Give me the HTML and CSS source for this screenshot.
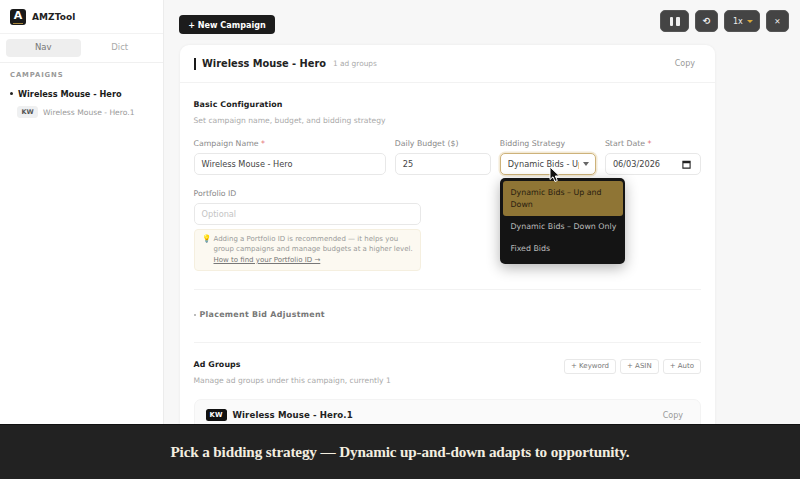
FILE: index.html
```html
<!DOCTYPE html>
<html lang="en">
<head>
<meta charset="utf-8">
<title>AMZTool</title>
<link rel="stylesheet" href="styles.css">
</head>
<body>
<div class="app">
  <aside class="sidebar">
    <div class="brand">
      <div class="logo"><span class="logo-a">A</span><span class="logo-line"></span></div>
      <span class="brand-name">AMZTool</span>
    </div>
    <div class="tabs"><div class="tab active">Nav</div><div class="tab">Dict</div></div>
    <div class="side-section">
      <div class="side-title">CAMPAIGNS</div>
      <div class="side-campaign"><span class="dot"></span>Wireless Mouse - Hero</div>
      <div class="side-group"><span class="kw-light">KW</span><span>Wireless Mouse - Hero.1</span></div>
    </div>
  </aside>
  <main class="main">
    <div class="topbar"><button class="new-btn">+ New Campaign</button></div>
    <section class="card">
      <header class="card-head">
        <span class="bar"></span>
        <span class="card-title">Wireless Mouse - Hero</span>
        <span class="card-count">1 ad groups</span>
        <span class="copy">Copy</span>
      </header>
      <div class="card-body">
        <h3 class="sec-title">Basic Configuration</h3>
        <p class="sec-sub">Set campaign name, budget, and bidding strategy</p>
        <div class="form-row">
          <div class="field"><label class="lbl">Campaign Name <i>*</i></label><div class="input">Wireless Mouse - Hero</div></div>
          <div class="field"><label class="lbl">Daily Budget ($)</label><div class="input">25</div></div>
          <div class="field"><label class="lbl">Bidding Strategy</label>
            <div class="input select"><span class="sel-text">Dynamic Bids - Up and Down</span><span class="caret"></span></div>
          </div>
          <div class="field"><label class="lbl">Start Date <i>*</i></label>
            <div class="input date"><span>06/03/2026</span>
              <svg class="cal" width="9" height="9" viewBox="0 0 10 10"><path d="M1 1.5h8v7.5h-8z" fill="none" stroke="#222" stroke-width="1.2"/><path d="M1 1h8v2.5h-8z" fill="#222"/></svg>
            </div>
          </div>
        </div>
        <div class="portfolio">
          <label class="lbl">Portfolio ID</label>
          <div class="input placeholder">Optional</div>
          <div class="tip">
            <span class="bulb">💡</span>
            <div>Adding a Portfolio ID is recommended — it helps you group campaigns and manage budgets at a higher level. <u>How to find your Portfolio ID →</u></div>
          </div>
        </div>
        <div class="placement"><span class="tiny-arrow"></span>Placement Bid Adjustment</div>
        <div class="groups-head">
          <div>
            <h3 class="sec-title">Ad Groups</h3>
            <p class="sec-sub">Manage ad groups under this campaign, currently 1</p>
          </div>
          <div class="add-btns"><span class="add">+ Keyword</span><span class="add">+ ASIN</span><span class="add">+ Auto</span></div>
        </div>
        <div class="group-card">
          <span class="kw-dark">KW</span>
          <span class="group-name">Wireless Mouse - Hero.1</span>
          <span class="copy">Copy</span>
        </div>
      </div>
    </section>
  </main>
</div>

<div class="controls">
  <div class="ctl ctl-pause"><span></span><span></span></div>
  <div class="ctl ctl-sq ctl-reload">⟲</div>
  <div class="ctl ctl-speed"><span>1x</span><span class="gold-caret"></span></div>
  <div class="ctl ctl-sq ctl-close">✕</div>
</div>

<div class="menu">
  <div class="opt selected">Dynamic Bids – Up and Down</div>
  <div class="opt">Dynamic Bids – Down Only</div>
  <div class="opt">Fixed Bids</div>
</div>

<svg class="cursor" width="13" height="18" viewBox="0 0 13 18"><path d="M1 1v12.5l3-2.7 2 4.7 2.3-1-2-4.5h4.2z" fill="#111" stroke="#fff" stroke-width="1"/></svg>

<div class="caption">Pick a bidding strategy — Dynamic up-and-down adapts to opportunity.</div>
</body>
</html>
```
FILE: styles.css
```css
* { box-sizing: border-box; }
html, body { margin: 0; height: 479px; overflow: hidden; }
body { font-family: "DejaVu Sans", sans-serif; color: #1a1a1a; background: #f7f7f7; position: relative; }
.app { display: flex; height: 479px; overflow: hidden; }

.sidebar { width: 164px; flex: none; background: #fff; border-right: 1px solid #ececec; }
.brand { height: 34px; display: flex; align-items: center; gap: 6px; padding: 0 10px; border-bottom: 1px solid #f2f2f2; }
.logo { width: 16px; height: 16px; border-radius: 3px; background: #1a1a1a; display: flex; flex-direction: column; align-items: center; color: #fff; overflow: hidden; }
.logo-a { font-size: 11px; font-weight: 700; line-height: 14px; }
.logo-line { width: 10px; height: 1px; background: #a8863c; }
.brand-name { font-size: 9px; font-weight: 600; color: #222; letter-spacing: .1px; }
.tabs { display: flex; gap: 2px; padding: 5px 6px; border-bottom: 1px solid #f0f0f0; height: 29px; }
.tab { flex: 1; height: 18px; line-height: 16px; text-align: center; font-size: 8.5px; color: #aaa; border-radius: 4px; }
.tab.active { background: #eee; color: #777; }
.side-section { padding: 8px 10px; }
.side-title { font-size: 6.8px; font-weight: 700; letter-spacing: .9px; color: #999; line-height: 9px; }
.side-campaign { margin-top: 7.5px; font-size: 8.2px; font-weight: 700; color: #1a1a1a; display: flex; align-items: center; gap: 5px; line-height: 12px; white-space: nowrap; }
.dot { width: 3px; height: 3px; border-radius: 50%; background: #222; flex: none; }
.side-group { margin-top: 6.5px; margin-left: 7px; display: flex; align-items: center; gap: 5px; font-size: 7.6px; color: #999; white-space: nowrap; }
.kw-light { background: #eef0f2; color: #555; font-size: 6.5px; font-weight: 700; width: 21px; text-align: center; height: 12px; line-height: 10px; border-radius: 3px; border: 1px solid #f0f0f0; }

.main { flex: 1; min-width: 0; padding: 15px 0 0 15.5px; overflow: hidden; }
.topbar { height: 30px; display: flex; align-items: flex-start; }
.new-btn { background: #1c1c1c; color: #fff; border: 0; font: 700 8.1px "DejaVu Sans", sans-serif; height: 19px; width: 96px; padding: 0; border-radius: 4px; margin-left: -.5px; }
.card { width: 535.5px; height: 434px; background: #fff; border-radius: 9px; box-shadow: 0 0 3px rgba(0,0,0,.06); overflow: hidden; }
.card-head { height: 38px; display: flex; align-items: center; padding: 0 12px 0 14.5px; border-bottom: 1px solid #f2f2f2; }
.bar { width: 2px; height: 12px; background: #1a1a1a; margin-right: 6px; }
.card-title { font-size: 9.8px; font-weight: 600; color: #222; }
.card-count { font-size: 7.4px; color: #aaa; margin-left: 7px; }
.copy { margin-left: auto; font-size: 8px; color: #999; padding-right: 8px; }
.card-body { padding: 15.5px 14px 0 14px; }
.sec-title { margin: 0; font-size: 7.9px; font-weight: 600; color: #222; line-height: 12px; letter-spacing: .1px; }
.sec-sub { margin: 4px 0 0; font-size: 7.6px; color: #aaa; line-height: 11px; }
.form-row { display: grid; grid-template-columns: minmax(0, 2fr) repeat(3, minmax(0, 1fr)); gap: 9px; margin-top: 12.5px; }
.field { min-width: 0; }
.lbl { display: block; font-size: 7.8px; color: #888; line-height: 11px; margin-bottom: 4px; white-space: nowrap; }
.lbl i { color: #e05a5a; font-style: normal; }
.input { height: 22px; border: 1px solid #e8e8e8; border-radius: 5px; background: #fff; font-size: 8.2px; color: #444; padding: 0 7px; display: flex; align-items: center; }
.select { border-color: #cdb27a; box-shadow: 0 0 0 1.5px #f3ead6; padding-right: 6px; gap: 4px; }
.sel-text { flex: 1; min-width: 0; overflow: hidden; white-space: nowrap; }
.caret { width: 0; height: 0; border: 3px solid transparent; border-top: 4px solid #666; border-bottom: 0; flex: none; }
.date { justify-content: space-between; padding-right: 9px; }
.portfolio { width: 227px; margin-top: 12.5px; }
.placeholder { color: #c4c4c4; }
.tip { margin-top: 4.5px; height: 42px; background: #fcf9f1; border: 1px solid #f5efdf; border-radius: 4px; padding: 4px 0 0 7px; display: flex; gap: 3px; font-size: 7px; line-height: 10.4px; color: #999; }
.tip div { width: 203px; flex: none; }
.bulb { font-size: 7.5px; line-height: 10px; width: 9px; flex: none; }
.tip u { color: #777; white-space: nowrap; }
.placement { margin-top: 18px; border-top: 1px solid #f2f2f2; border-bottom: 1px solid #f2f2f2; height: 53.5px; padding-bottom: 2px; display: flex; align-items: center; gap: 4px; font-size: 7.9px; font-weight: 700; color: #777; letter-spacing: .3px; }
.tiny-arrow { width: 2px; height: 2px; background: #bbb; }
.groups-head { display: flex; justify-content: space-between; padding-top: 16px; }
.add-btns { display: flex; gap: 4px; }
.add { height: 15px; border: 1px solid #e8e8e8; border-radius: 3px; padding: 0 6px; font-size: 7px; line-height: 13px; color: #777; }
.group-card { margin-top: 13.5px; height: 40px; background: #fafafa; border: 1px solid #f3f3f3; border-radius: 7px; padding: 0 0 8px 11px; display: flex; align-items: center; gap: 6px; }
.kw-dark { background: #111; color: #fff; font-size: 6.8px; font-weight: 700; width: 21px; height: 12px; line-height: 12px; text-align: center; border-radius: 2.5px; }
.group-name { font-size: 8.6px; font-weight: 600; color: #222; letter-spacing: .1px; }
.group-card .copy { padding-right: 17px; }

.controls { position: absolute; top: 10px; right: 11px; display: flex; gap: 6px; }
.ctl { height: 22px; background: #444; border: 1px solid #555; border-radius: 5px; color: #eee; display: flex; align-items: center; justify-content: center; font-size: 8px; }
.ctl-pause { width: 29px; gap: 3px; }
.ctl-pause span { width: 3.5px; height: 9px; background: #eee; border-radius: 1px; }
.ctl-sq { width: 23px; }
.ctl-speed { width: 36px; justify-content: space-between; padding: 0 6px 0 8px; }
.gold-caret { width: 0; height: 0; border: 3px solid transparent; border-top: 3px solid #d9a93a; border-bottom: 0; }
.ctl-reload { font-size: 9px; font-weight: 700; }
.ctl-close { font-size: 7.5px; }

.menu { position: absolute; left: 500px; top: 178px; width: 125px; height: 86px; background: #141414; border-radius: 5px; padding: 2.5px; box-shadow: 0 4px 14px rgba(0,0,0,.3); font-size: 7.9px; color: #bbb; }
.opt { padding: 0 8px; height: 22px; line-height: 22px; white-space: nowrap; }
.opt.selected { height: 35.5px; line-height: 12px; padding-top: 6px; background: #8f7535; color: #2a2110; border-radius: 3px; white-space: normal; }

.cursor { position: absolute; left: 549px; top: 166px; }

.caption { position: absolute; left: 0; right: 0; top: 424px; height: 55px; background: #222; border-top: 1px solid #111; color: #f3eee0; display: flex; align-items: center; justify-content: center; font: 700 15.2px "Liberation Serif", serif; letter-spacing: -.15px; }
```
